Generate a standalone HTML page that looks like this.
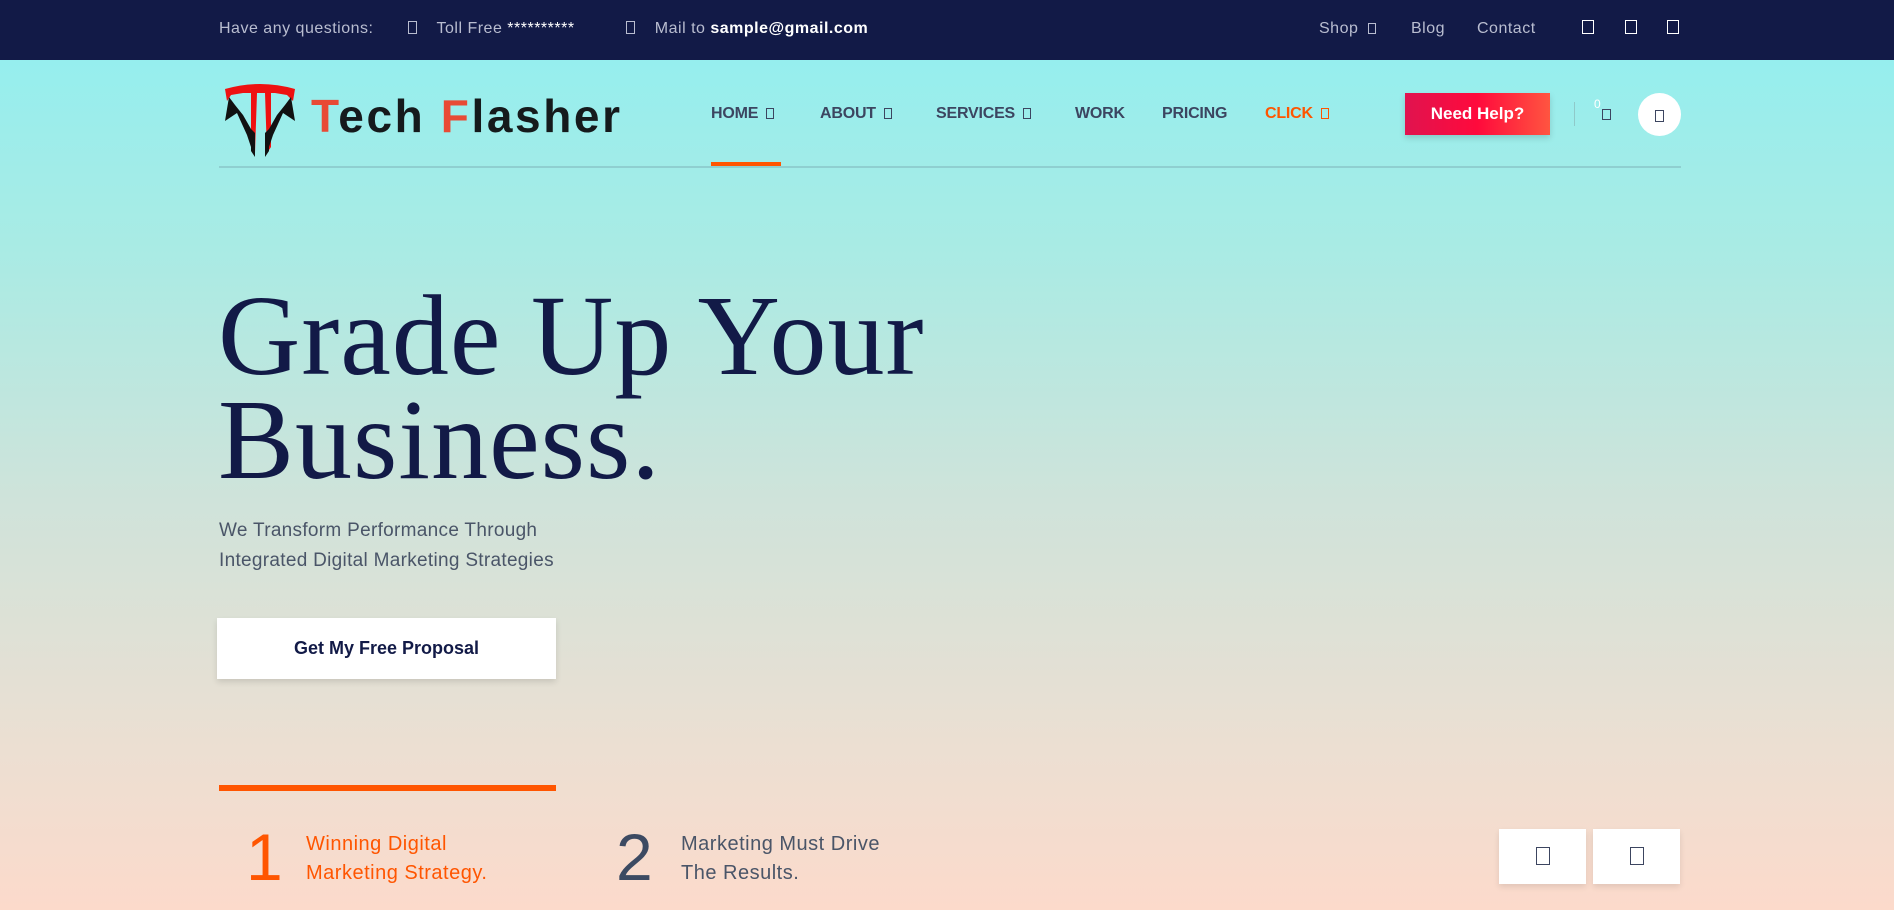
<!DOCTYPE html>
<html><head><meta charset="utf-8"><style>
*{margin:0;padding:0;box-sizing:border-box}
body{width:1894px;height:910px;overflow:hidden;font-family:"Liberation Sans",sans-serif;position:relative;background:linear-gradient(180deg,#96eeee 60px,#a9ebe4 250px,#cfe3da 500px,#ecdfd2 750px,#fcdacb 910px)}
.a{position:absolute;white-space:nowrap}
.top{position:absolute;left:0;top:0;width:1894px;height:60px;background:#121a47}
.tt{color:#b9bdd0;font-size:16px;top:20px;letter-spacing:0.5px}
.bx{display:inline-block;width:9px;height:13px;border:1.3px solid currentColor;vertical-align:-1px}
.nav{top:105px;font-size:16px;font-weight:bold;color:#3c4560;letter-spacing:-0.2px}
.nav .bx{width:8px;height:11px;margin-left:8px;border-width:1.2px}
h1{position:absolute;left:218px;top:284px;font-family:"Liberation Serif",serif;font-weight:normal;font-size:114px;line-height:104px;color:#121a47;letter-spacing:1px}
.sub{left:219px;top:516px;font-size:19px;line-height:30px;color:#4a5568;white-space:normal;width:380px;letter-spacing:0.3px}
.btn{left:217px;top:618px;width:339px;height:61px;background:#fff;box-shadow:0 3px 6px rgba(0,0,0,.12);text-align:center;line-height:61px;font-size:18px;font-weight:bold;color:#121a47}
.num{font-size:66px;font-weight:normal;top:824px;line-height:66px}
.ft{font-size:20px;line-height:29px;top:830px;letter-spacing:0.5px}
.sq{top:829px;width:87px;height:55px;background:#fff;box-shadow:0 3px 6px rgba(0,0,0,.1);text-align:center;padding-top:18px;color:#3c4560}
.sq .bx{width:14px;height:18px;border-width:1.5px}
</style></head><body>
<div class="top"></div>
<div class="a tt" style="left:219px">Have any questions:</div>
<div class="a tt" style="left:408px"><span class="bx"></span>&nbsp;&nbsp;&nbsp; Toll Free <span style="color:#fff">**********</span></div>
<div class="a tt" style="left:626px"><span class="bx"></span>&nbsp;&nbsp;&nbsp; Mail to <b style="color:#fff">sample@gmail.com</b></div>
<div class="a tt" style="left:1319px">Shop &nbsp;<span class="bx" style="width:8px;height:11px"></span></div>
<div class="a tt" style="left:1411px">Blog</div>
<div class="a tt" style="left:1477px">Contact</div>
<div class="a tt" style="left:1582px;color:#fff"><span class="bx" style="width:12px;height:14px"></span></div>
<div class="a tt" style="left:1625px;color:#fff"><span class="bx" style="width:12px;height:14px"></span></div>
<div class="a tt" style="left:1667px;color:#fff"><span class="bx" style="width:12px;height:14px"></span></div>

<svg class="a" style="left:215px;top:75px" width="90" height="85" viewBox="0 0 90 85">
<path d="M10 14 Q45 4 80 14 L78 26 L72 20 L60 18 L56 18 L56 72 L52 78 L50 18 L42 18 L40 78 L36 72 L36 18 L28 18 L16 20 L12 26Z" fill="#ee1111"/>
<path d="M14 22 L10 46 L22 38 L32 60 L36 72 L36 54 L28 40 L20 30Z" fill="#111"/>
<path d="M76 22 L80 46 L68 38 L58 60 L54 72 L54 54 L62 40 L70 30Z" fill="#111"/>
<path d="M36 54 L36 76 L40 82 L40 58Z M54 54 L54 76 L50 82 L50 58Z" fill="#111"/>
</svg>
<div class="a" style="left:311px;top:89px;font-size:46px;font-weight:bold;color:#151a1c;letter-spacing:2.6px;font-family:'Liberation Sans',sans-serif"><span style="color:#e84a35">T</span>ech <span style="color:#e84a35">F</span>lasher</div>

<div class="a nav" style="left:711px">HOME<span class="bx"></span></div>
<div class="a nav" style="left:820px">ABOUT<span class="bx"></span></div>
<div class="a nav" style="left:936px">SERVICES<span class="bx"></span></div>
<div class="a nav" style="left:1075px">WORK</div>
<div class="a nav" style="left:1162px">PRICING</div>
<div class="a nav" style="left:1265px;color:#ff5500">CLICK<span class="bx"></span></div>
<div class="a" style="left:711px;top:162px;width:70px;height:5px;background:#ff5500"></div>
<div class="a" style="left:219px;top:166px;width:1462px;height:2px;background:#8fcfd0"></div>

<div class="a" style="left:1405px;top:93px;width:145px;height:42px;background:linear-gradient(90deg,#e0134f,#ff0a3c 50%,#ff5540);box-shadow:0 3px 6px rgba(0,0,0,.15);color:#fff;font-weight:bold;font-size:17px;text-align:center;line-height:42px">Need Help?</div>
<div class="a" style="left:1574px;top:102px;width:1px;height:24px;background:#8fc9c9"></div>
<div class="a" style="left:1594px;top:97px;color:#fff;font-size:12px">0</div>
<div class="a" style="left:1602px;top:106px;color:#3c4560"><span class="bx" style="width:9px;height:11px"></span></div>
<div class="a" style="left:1638px;top:93px;width:43px;height:43px;border-radius:50%;background:#fff;color:#3c4560;text-align:center;padding-top:15px"><span class="bx" style="width:9px;height:12px"></span></div>

<h1>Grade Up Your<br>Business.</h1>
<div class="a sub">We Transform Performance Through Integrated Digital Marketing Strategies</div>
<div class="a btn">Get My Free Proposal</div>

<div class="a" style="left:219px;top:785px;width:337px;height:6px;background:#ff5500"></div>
<div class="a num" style="left:246px;color:#ff5500">1</div>
<div class="a ft" style="left:306px;color:#ff5500">Winning Digital<br>Marketing Strategy.</div>
<div class="a num" style="left:616px;color:#3c4a62">2</div>
<div class="a ft" style="left:681px;color:#4a5568">Marketing Must Drive<br>The Results.</div>
<div class="a sq" style="left:1499px"><span class="bx"></span></div>
<div class="a sq" style="left:1593px"><span class="bx"></span></div>
</body></html>
